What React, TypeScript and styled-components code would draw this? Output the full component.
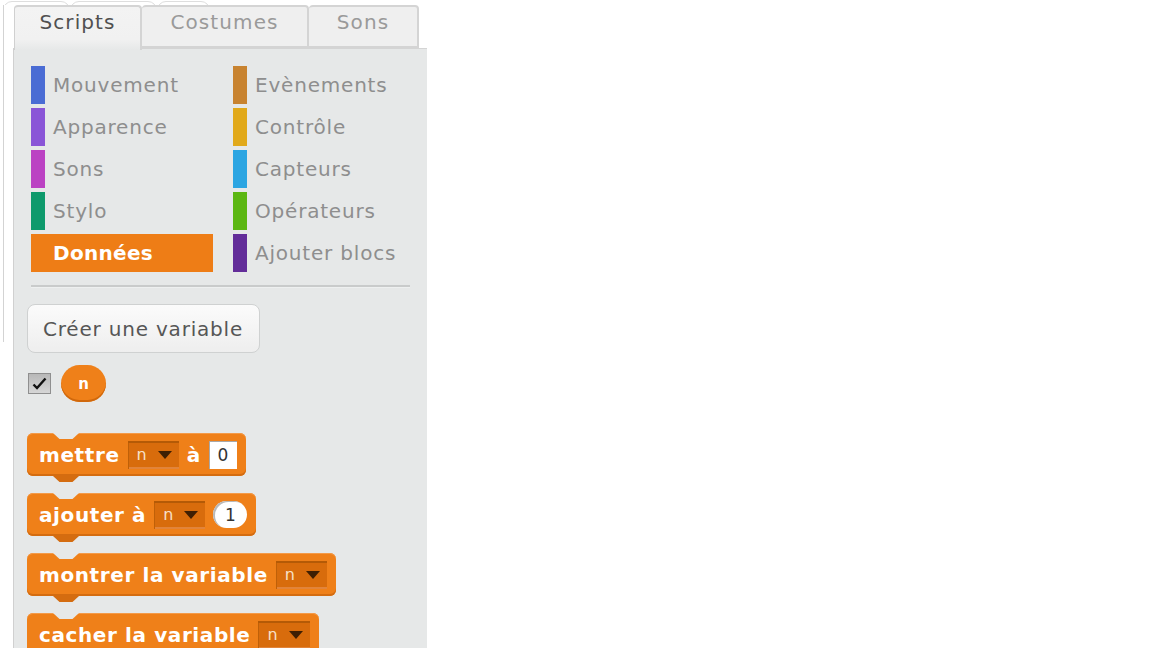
import React from "react";
import styled, { createGlobalStyle } from "styled-components";

const GlobalStyle = createGlobalStyle`
  body {
    margin: 0;
    background: #ffffff;
    font-family: "DejaVu Sans", "Liberation Sans", sans-serif;
  }
`;

const ORANGE = "#ef8019";
const PANEL = "#e6e8e8";

const Page = styled.div`
  display: flex;
  flex-direction: column;
  height: 648px;
  overflow: hidden;
`;
const TopStrip = styled.div`
  display: flex;
  flex-shrink: 0;
  height: 5px;
  overflow: hidden;
  padding-left: 3px;
`;
const StripTab = styled.div<{ $w: number }>`
  box-sizing: border-box;
  width: ${(p) => p.$w}px;
  height: 14px;
  margin-top: 1px;
  border: 1px solid #dedede;
  border-radius: 9px 9px 0 0;
`;
const Main = styled.div`
  display: flex;
  flex: 1;
  min-height: 0;
`;
const StageEdge = styled.div`
  width: 8px;
  height: 337px;
  margin-left: 3px;
  margin-right: 1px;
  border-left: 1px solid #d3d3d3;
`;
const Palette = styled.div`
  width: 414px;
  display: flex;
  flex-direction: column;
`;
const TabRow = styled.div`
  display: flex;
  flex-shrink: 0;
  align-items: flex-end;
  height: 43px;
  padding-left: 1px;
`;
const Tab = styled.div<{ $active?: boolean; $w: number }>`
  box-sizing: border-box;
  width: ${(p) => p.$w}px;
  height: ${(p) => (p.$active ? 45 : 43)}px;
  margin-bottom: ${(p) => (p.$active ? -2 : 0)}px;
  position: relative;
  z-index: ${(p) => (p.$active ? 2 : 1)};
  border: 2px solid #d4d4d4;
  border-bottom: ${(p) => (p.$active ? "none" : "2px solid #d4d4d4")};
  border-left: ${(p) => (p.$active ? "1px solid #d0d0d0" : "none")};
  border-radius: 4px 4px 0 0;
  background: ${(p) =>
    p.$active ? `linear-gradient(#f3f3f3 0%, #f1f1f1 75%, ${PANEL} 100%)` : "#efefef"};
  color: ${(p) => (p.$active ? "#505050" : "#9a9a9a")};
  font-size: 20px;
  letter-spacing: 1.1px;
  text-align: center;
  padding-top: 3px;
`;
const Panel = styled.div`
  flex: 1;
  min-height: 0;
  background: ${PANEL};
  border-left: 1px solid #d0d0d0;
  border-top: 1px solid #d4d4d4;
  padding: 17px 0 0 13px;
`;
const Categories = styled.div`
  display: grid;
  grid-template-columns: 182px 182px;
  column-gap: 20px;
  row-gap: 4px;
  margin-left: 4px;
`;
const Category = styled.div<{ $active?: boolean }>`
  display: flex;
  align-items: center;
  height: 38px;
  background: ${(p) => (p.$active ? "#ee7d16" : "transparent")};
  color: ${(p) => (p.$active ? "#ffffff" : "#8e8e8e")};
  font-size: 20px;
  font-weight: ${(p) => (p.$active ? 700 : 400)};
  letter-spacing: ${(p) => (p.$active ? 0.3 : 0.8)}px;
  padding-left: ${(p) => (p.$active ? 22 : 0)}px;
`;
const ColorBar = styled.span<{ $color: string }>`
  width: 14px;
  height: 38px;
  background: ${(p) => p.$color};
  margin-right: 8px;
`;
const Divider = styled.div`
  width: 379px;
  height: 2px;
  margin: 13px 0 0 4px;
  background: #c9cbcb;
  border-bottom: 1px solid #eef0f0;
`;
const MakeButton = styled.div`
  box-sizing: border-box;
  width: 233px;
  height: 49px;
  margin-top: 16px;
  border: 1px solid #cfd1d1;
  border-radius: 8px;
  background: linear-gradient(#fbfbfb, #eeeeee);
  color: #565656;
  font-size: 20px;
  letter-spacing: 0.8px;
  display: flex;
  align-items: center;
  padding-left: 15px;
`;
const VarRow = styled.div`
  display: flex;
  align-items: center;
  gap: 10px;
  margin-top: 12px;
  margin-left: 1px;
`;
const Check = styled.div`
  box-sizing: border-box;
  width: 23px;
  height: 21px;
  border: 1px solid #8f8f8f;
  background: linear-gradient(#b8b8b8, #d6d6d6);
  display: flex;
  align-items: center;
  justify-content: center;
`;
const Reporter = styled.div`
  width: 45px;
  height: 37px;
  border-radius: 19px;
  background: ${ORANGE};
  box-shadow: inset 0 -2px 0 #d0680c;
  color: #fff;
  font-weight: 700;
  font-size: 15px;
  display: flex;
  align-items: center;
  justify-content: center;
`;
const Blocks = styled.div`
  display: flex;
  flex-direction: column;
  align-items: flex-start;
  gap: 17px;
  margin-top: 31px;
`;
const Block = styled.div`
  position: relative;
  box-sizing: border-box;
  display: inline-flex;
  align-items: center;
  gap: 8px;
  height: 43px;
  padding: 0 9px 0 12px;
  background: ${ORANGE};
  border-radius: 6px;
  box-shadow: inset 0 -2px 0 #d46c10, inset 0 1px 0 #f49a48;
  color: #fff;
  font-size: 20px;
  font-weight: 700;
  letter-spacing: 0.6px;
  white-space: nowrap;
  &::before {
    content: "";
    position: absolute;
    top: 0;
    left: 26px;
    width: 26px;
    height: 6px;
    background: ${PANEL};
    clip-path: polygon(0 0, 100% 0, 75% 100%, 25% 100%);
  }
  &::after {
    content: "";
    position: absolute;
    bottom: -6px;
    left: 26px;
    width: 26px;
    height: 6px;
    background: #d46c10;
    clip-path: polygon(0 0, 100% 0, 75% 100%, 25% 100%);
  }
`;
const Dropdown = styled.div`
  box-sizing: border-box;
  display: flex;
  align-items: center;
  gap: 11px;
  height: 28px;
  padding: 0 7px 0 9px;
  background: #d86c0c;
  box-shadow: inset 0 2px 0 #b45a06, inset 1px 0 0 #bf6008, inset 0 -2px 0 #e2843a;
  color: #f7e0c8;
  font-size: 16px;
  font-weight: 400;
  letter-spacing: 0;
`;
const Arrow = styled.span`
  width: 0;
  height: 0;
  border-left: 7px solid transparent;
  border-right: 7px solid transparent;
  border-top: 8px solid #3f1f03;
`;
const TextInput = styled.div`
  box-sizing: border-box;
  width: 28px;
  height: 28px;
  background: #ffffff;
  box-shadow: inset 1px 1px 0 #a8a8a8;
  color: #333;
  font-size: 17px;
  font-weight: 400;
  letter-spacing: 0;
  display: flex;
  align-items: center;
  justify-content: center;
`;
const NumberInput = styled(TextInput)`
  width: 34px;
  height: 27px;
  border-radius: 14px;
  box-shadow: inset 2px 1px 0 #b8b8b8;
`;

const categories = [
  { label: "Mouvement", color: "#4a6cd4" },
  { label: "Evènements", color: "#c88330" },
  { label: "Apparence", color: "#8a55d7" },
  { label: "Contrôle", color: "#e1a91a" },
  { label: "Sons", color: "#bb42c3" },
  { label: "Capteurs", color: "#2ca5e2" },
  { label: "Stylo", color: "#0e9a6c" },
  { label: "Opérateurs", color: "#5cb712" },
  { label: "Données", color: "#ee7d16", active: true },
  { label: "Ajouter blocs", color: "#632d99" },
];

const VarMenu = () => (
  <Dropdown>
    n<Arrow />
  </Dropdown>
);

export default function App() {
  return (
    <Page>
      <GlobalStyle />
      <TopStrip>
        <StripTab $w={67} />
        <StripTab $w={87} />
        <StripTab $w={53} />
      </TopStrip>
      <Main>
        <StageEdge />
        <Palette>
          <TabRow>
            <Tab $active $w={128}>Scripts</Tab>
            <Tab $w={167}>Costumes</Tab>
            <Tab $w={110}>Sons</Tab>
          </TabRow>
          <Panel>
            <Categories>
              {categories.map((c) =>
                c.active ? (
                  <Category key={c.label} $active>
                    {c.label}
                  </Category>
                ) : (
                  <Category key={c.label}>
                    <ColorBar $color={c.color} />
                    {c.label}
                  </Category>
                )
              )}
            </Categories>
            <Divider />
            <MakeButton>Créer une variable</MakeButton>
            <VarRow>
              <Check>
                <svg width="15" height="13" viewBox="0 0 15 13">
                  <path d="M1.5 7.5 L5 11 L13.5 1.5" fill="none" stroke="#111" strokeWidth="2.4" />
                </svg>
              </Check>
              <Reporter>n</Reporter>
            </VarRow>
            <Blocks>
              <Block>
                mettre <VarMenu /> à <TextInput>0</TextInput>
              </Block>
              <Block>
                ajouter à <VarMenu /> <NumberInput>1</NumberInput>
              </Block>
              <Block>
                montrer la variable <VarMenu />
              </Block>
              <Block>
                cacher la variable <VarMenu />
              </Block>
            </Blocks>
          </Panel>
        </Palette>
      </Main>
    </Page>
  );
}
